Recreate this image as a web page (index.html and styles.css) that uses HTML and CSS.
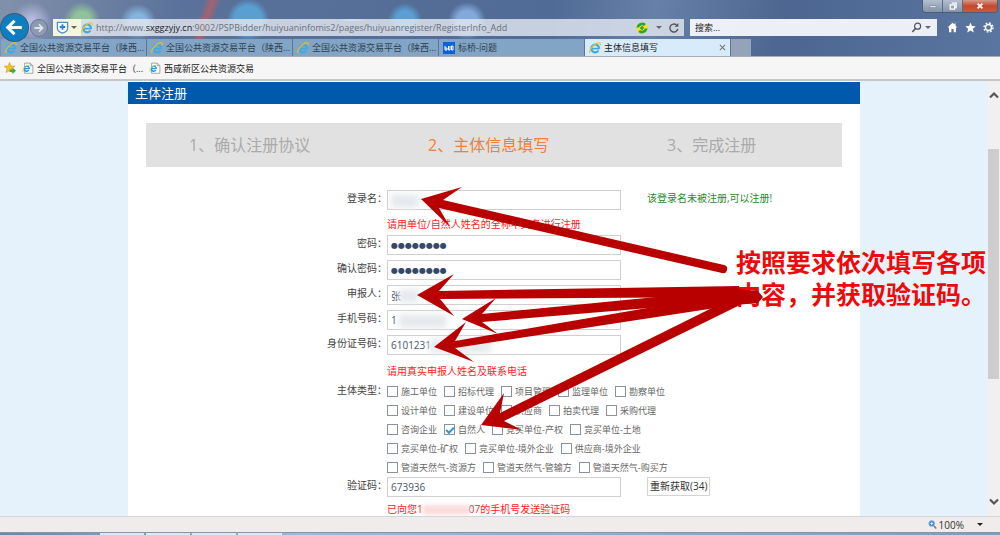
FILE: index.html
```html
<!DOCTYPE html>
<html lang="zh-CN">

<head>
    <meta charset="UTF-8">
    <meta name="viewport" content="width=device-width, initial-scale=1.0">
    <title>主体信息填写</title>
    <link rel="stylesheet" href="styles.css">
</head>

<body>

    <svg class="defs" width="0" height="0">
        <defs>
            <symbol id="ie" viewBox="0 0 16 16">
                <path d="M13.4 8.9A5.2 5.2 0 1 0 12.6 11.4" fill="none" stroke="#3fa9e8" stroke-width="2.8"></path>
                <path d="M4 8.8H14" stroke="#3fa9e8" stroke-width="2.2"></path>
                <path d="M1.6 14.6C-.8 12 5.5 2.6 11.6 1.2C14.6.5 15.5 2 14.6 4.4" fill="none" stroke="#f3bd1d" stroke-width="1.5"></path>
            </symbol>
            <symbol id="ie-page" viewBox="0 0 16 16">
                <path d="M3.5 1.5H11L14.5 5V15H3.5Z" fill="#fff" stroke="#8a8a8a"></path>
                <path d="M11 1.5V5H14.5" fill="none" stroke="#8a8a8a"></path>
                <path d="M9.8 9A3.4 3.4 0 1 0 9.2 10.9M3.8 8.8H10" fill="none" stroke="#2b93dc" stroke-width="1.8"></path>
                <path d="M1.6 13.2C0 11 4 4.6 9.6 4.4" fill="none" stroke="#f3bd1d" stroke-width="1.2"></path>
            </symbol>
        </defs>
    </svg>

    <div class="window">

        <header class="chrome">
            <div class="window-buttons">
                <button class="min" aria-label="最小化"><svg viewBox="0 0 10 10"><path d="M1 5H9V7H1Z" fill="#fff" stroke="#555" stroke-width=".5"></path></svg></button>
                <button class="max" aria-label="还原"><svg viewBox="0 0 10 10"><path d="M3.5 1.5H9V7H7M1.5 3.5H7V9H1.5Z" fill="none" stroke="#fff" stroke-width="1.5"></path></svg></button>
                <button class="close" aria-label="关闭"><svg viewBox="0 0 10 10"><path d="M2 2L8 8M8 2L2 8" stroke="#fff" stroke-width="2.2"></path></svg></button>
            </div>

            <div class="toolbar">
                <button class="back" aria-label="后退"><svg viewBox="0 0 26 26"><path d="M20 13H7M13 6.5L6.5 13L13 19.5" fill="none" stroke="#fff" stroke-width="3"></path></svg></button>
                <button class="forward" aria-label="前进"><svg viewBox="0 0 18 18"><path d="M4 9H13M9 5L13 9L9 13" fill="none" stroke="#dde3ee" stroke-width="2"></path></svg></button>
                <div class="address">
                    <span class="shield">
                        <svg viewBox="0 0 14 14"><path d="M1.5 1.5H12.5V8Q12.5 11 7 13Q1.5 11 1.5 8Z" fill="#fff" stroke="#4a8fd8" stroke-width="1.4"></path><path d="M7 3.5V9.5M4 6.5H10" stroke="#2f7fd6" stroke-width="2"></path></svg>
                        <i class="caret"></i>
                    </span>
                    <svg class="icon"><use href="#ie"></use></svg>
                    <span class="url">http://www.<b>sxggzyjy.cn</b>:9002/PSPBidder/huiyuaninfomis2/pages/huiyuanregister/RegisterInfo_Add</span>
                    <svg class="icon" viewBox="0 0 12 12"><circle cx="6" cy="6" r="5.6" fill="#f7e11b"></circle><path d="M.5 5.5A5.6 5.6 0 0 1 9.8 2L8 4A3.3 3.3 0 0 0 3 5.5ZM11.5 6.5A5.6 5.6 0 0 1 2.2 10L4 8A3.3 3.3 0 0 0 9 6.5Z" fill="#27a536"></path><path d="M6 4V8M4 6H8" stroke="#27a536" stroke-width="1.5"></path></svg>
                    <i class="caret"></i>
                    <button class="reload" aria-label="刷新"><svg viewBox="0 0 12 12"><path d="M9.8 7A4 4 0 1 1 8.5 3" fill="none" stroke="#555" stroke-width="1.4"></path><path d="M6.6 4.8H10.4V1Z" fill="#555"></path></svg></button>
                </div>
                <div class="search">
                    <input type="text" aria-label="搜索" placeholder="搜索...">
                    <svg viewBox="0 0 12 12"><circle cx="7.2" cy="4.5" r="3.3" fill="none" stroke="#555" stroke-width="1.3"></circle><path d="M4.8 7L1.5 10.8" stroke="#555" stroke-width="1.7"></path></svg>
                    <i class="caret"></i>
                </div>
                <div class="tools">
                    <svg viewBox="0 0 12 12"><path d="M6 .8L.6 6H2.2V11.2H4.8V7.5H7.2V11.2H9.8V6H11.4L9.4 4V1.5H8V2.7Z" fill="#fff"></path></svg>
                    <svg viewBox="0 0 12 12"><path d="M6 .5L7.6 4.3L11.7 4.6L8.6 7.3L9.6 11.4L6 9.2L2.4 11.4L3.4 7.3L.3 4.6L4.4 4.3Z" fill="#fff"></path></svg>
                    <svg viewBox="0 0 12 12"><circle cx="6" cy="6" r="3.3" fill="none" stroke="#fff" stroke-width="1.6"></circle><circle cx="6" cy="6" r="4.9" fill="none" stroke="#fff" stroke-width="1.6" stroke-dasharray="1.9 1.95"></circle></svg>
                </div>
            </div>

            <nav class="tabs">
                <a class="tab" href="#"><svg class="icon"><use href="#ie"></use></svg><span>全国公共资源交易平台（陕西...</span></a>
                <a class="tab" href="#"><svg class="icon"><use href="#ie"></use></svg><span>全国公共资源交易平台（陕西...</span></a>
                <a class="tab" href="#"><svg class="icon"><use href="#ie"></use></svg><span>全国公共资源交易平台（陕西...</span></a>
                <a class="tab" href="#"><svg class="icon" viewBox="0 0 12 12"><path d="M0 0H12V12H0Z" fill="#0b62dc"></path><path d="M2 4V8M2 6H4V8H2M5.5 4V8H7V4M8.5 4H10V8H8.5Z" fill="none" stroke="#fff" stroke-width="1"></path></svg><span>标桥-问题</span></a>
                <a class="tab active" href="#"><svg class="icon"><use href="#ie"></use></svg><span>主体信息填写</span><svg class="tab-close" viewBox="0 0 8 8"><path d="M1 1L7 7M7 1L1 7" stroke="#777" stroke-width="1.2"></path></svg></a>
                <button class="new-tab" aria-label="新建选项卡"></button>
            </nav>
        </header>

        <div class="favorites">
            <svg class="icon" viewBox="0 0 12 12"><path d="M5.5 .5L7 4L10.8 4.3L8 6.8L8.8 10.6L5.5 8.6L2.2 10.6L3 6.8L.2 4.3L4 4Z" fill="#f9c22e" stroke="#d8941a" stroke-width=".6"></path><path d="M5.5 7.5H8.5V5.5L12 8.7L8.5 12V10H5.5Z" fill="#3bb23b"></path></svg>
            <a href="#"><svg class="icon"><use href="#ie-page"></use></svg>全国公共资源交易平台（...</a>
            <a href="#"><svg class="icon"><use href="#ie-page"></use></svg>西咸新区公共资源交易</a>
        </div>

        <div class="viewport">
            <main class="page">
                <h1>主体注册</h1>

                <ol class="steps">
                    <li>1、确认注册协议</li>
                    <li class="current">2、主体信息填写</li>
                    <li>3、完成注册</li>
                </ol>

                <form class="register">
                    <div class="group">
                        <div class="row">
                            <label for="login">登录名：</label>
                            <div class="field"><input type="text" id="login"><span class="mask mask-login"></span></div>
                            <span class="ok">该登录名未被注册,可以注册!</span>
                        </div>
                        <p class="hint">请用单位/自然人姓名的全称中文名进行注册</p>
                        <div class="row">
                            <label for="pwd">密码：</label>
                            <div class="field"><input type="text" class="dots" id="pwd" value="●●●●●●●●"></div>
                        </div>
                        <div class="row">
                            <label for="pwd2">确认密码：</label>
                            <div class="field"><input type="text" class="dots" id="pwd2" value="●●●●●●●●"></div>
                        </div>
                        <div class="row">
                            <label for="person">申报人：</label>
                            <div class="field"><input type="text" id="person" value="张"><span class="mask mask-person"></span></div>
                        </div>
                        <div class="row">
                            <label for="phone">手机号码：</label>
                            <div class="field"><input type="text" id="phone" value="1"><span class="mask mask-phone"></span></div>
                        </div>
                        <div class="row">
                            <label for="idcard">身份证号码：</label>
                            <div class="field"><input type="text" id="idcard" value="6101231"><span class="mask mask-id"></span></div>
                        </div>
                    </div>

                    <div class="group types-group">
                        <p class="hint">请用真实申报人姓名及联系电话</p>
                        <div class="types" role="group" aria-labelledby="types-label">
                            <span class="types-label" id="types-label">主体类型：</span>
                            <div class="options">
                                <div class="line">
                                    <label><input type="checkbox">施工单位</label>
                                    <label><input type="checkbox">招标代理</label>
                                    <label><input type="checkbox">项目管理</label>
                                    <label><input type="checkbox">监理单位</label>
                                    <label><input type="checkbox">勘察单位</label>
                                </div>
                                <div class="line">
                                    <label><input type="checkbox">设计单位</label>
                                    <label><input type="checkbox">建设单位</label>
                                    <label><input type="checkbox">供应商</label>
                                    <label><input type="checkbox">拍卖代理</label>
                                    <label><input type="checkbox">采购代理</label>
                                </div>
                                <div class="line">
                                    <label><input type="checkbox">咨询企业</label>
                                    <label><input type="checkbox" checked>自然人</label>
                                    <label><input type="checkbox">竞买单位-产权</label>
                                    <label><input type="checkbox">竞买单位-土地</label>
                                </div>
                                <div class="line">
                                    <label><input type="checkbox">竞买单位-矿权</label>
                                    <label><input type="checkbox">竞买单位-境外企业</label>
                                    <label><input type="checkbox">供应商-境外企业</label>
                                </div>
                                <div class="line">
                                    <label><input type="checkbox">管道天然气-资源方</label>
                                    <label><input type="checkbox">管道天然气-管输方</label>
                                    <label><input type="checkbox">管道天然气-购买方</label>
                                </div>
                            </div>
                        </div>
                    </div>

                    <div class="group code-group">
                        <div class="row">
                            <label for="code">验证码：</label>
                            <div class="field"><input type="text" id="code" value="673936"></div>
                            <button type="button" class="resend">重新获取(34)</button>
                        </div>
                        <p class="hint">已向您1<span class="smudge"></span>07的手机号发送验证码</p>
                    </div>
                </form>
            </main>

            <div class="scrollbar">
                <svg viewBox="0 0 10 8"><path d="M1 6.5L5 2.5L9 6.5" fill="none" stroke="#555" stroke-width="2.2"></path></svg>
                <div class="track"><div class="thumb"></div></div>
                <svg viewBox="0 0 10 8"><path d="M1 1.5L5 5.5L9 1.5" fill="none" stroke="#555" stroke-width="2.2"></path></svg>
            </div>
        </div>

        <footer class="status">
            <svg viewBox="0 0 12 12"><circle cx="5" cy="4.8" r="4" fill="#2f86d8" stroke="#9cc3e8"></circle><path d="M5 2.8V6.8M3 4.8H7" stroke="#fff" stroke-width="1.2"></path><path d="M8 8L11 11.2" stroke="#a5673a" stroke-width="2"></path></svg>
            <span>100%</span>
            <i class="caret"></i>
        </footer>
        <div class="taskbar"><i></i><i></i><i></i><i></i></div>
    </div>

    <p class="note">按照要求依次填写各项<br>内容，并获取验证码。</p>

    <!-- arrows from the note to the fields -->
    <svg class="arrows" width="1000" height="535" viewBox="0 0 1000 535">
        <path d="M421 199L462 187L443 200L724 265A4 4 0 0 1 722 273L439 208L450 227Z"></path>
        <path d="M417 295L454 274L439 291L739 286L741 297L440 299L454 316Z"></path>
        <path d="M462 319L496 298L482 314L738 289L757 291L757 299L482 322L498 334Z"></path>
        <path d="M434 347L466 322L455 341L740 292L757 290L763 297L758 303L735 305L455 348L474 362Z"></path>
        <path d="M481 425L504 393L500 413L716 306L750 293L758 303L742 304L504 421L522 430Z"></path>
    </svg>

</body>

</html>
```
FILE: styles.css
```css
* {
    box-sizing: border-box;
}

body {
    margin: 0;
    position: relative;
    font-family: "Open Sans", "Noto Sans CJK SC", sans-serif;
    font-size: 10px;
    color: #444;
    overflow: hidden;
}

button {
    border: 0;
    padding: 0;
    font: inherit;
    background: none;
}

a {
    color: inherit;
    text-decoration: none;
}

.defs {
    position: absolute;
}

.window {
    display: flex;
    flex-direction: column;
    height: 100vh;
}

.icon {
    width: 12px;
    height: 12px;
    flex: none;
}

.caret {
    border: 3px solid transparent;
    border-top-color: #666;
    border-bottom: 0;
}

/* browser chrome */
.chrome {
    position: relative;
    padding-top: 16px;
    border-bottom: 1px solid #a9aeb8;
    background:
        radial-gradient(circle at 32px 22px, #b6b8e0 4px, transparent 20px),
        radial-gradient(circle at 82px 20px, #8fc29a 8px, transparent 18px),
        radial-gradient(circle at 138px 22px, #85b4de 8px, transparent 18px),
        linear-gradient(110deg, transparent 192px, #a8616e 200px, transparent 208px),
        radial-gradient(circle at 248px 20px, #5a9fd2 14px, transparent 21px),
        radial-gradient(ellipse at 353px 20px, #a3b6b8 8px, transparent 16px),
        radial-gradient(circle at 405px 20px, #5b9fd2 9px, transparent 17px),
        radial-gradient(circle at 467px 21px, #83a9dc 10px, transparent 19px),
        radial-gradient(ellipse at 795px 22px, #a9c8e4 8px, transparent 18px),
        radial-gradient(ellipse at 848px 22px, #a3bdc9 6px, transparent 16px),
        radial-gradient(ellipse at 903px 22px, #8fa7b3 6px, transparent 16px),
        radial-gradient(ellipse at 954px 22px, #91aeb8 6px, transparent 16px),
        linear-gradient(100deg, #8291ab 0%, #5a729a 18%, #506b96 55%, #6780a8 65%, #4c6691 78%, #5a759f 100%);
}

.window-buttons {
    position: absolute;
    top: 0;
    right: 2px;
    display: flex;
    height: 13px;
    border: 1px solid #4f5c74;
    border-top: 0;
    border-radius: 0 0 4px 4px;
    overflow: hidden;
}

.window-buttons button {
    width: 20px;
    border-right: 1px solid #5d6b84;
    background: linear-gradient(#b3bfd0, #8493ac);
    display: flex;
    align-items: center;
    justify-content: center;
}

.window-buttons .close {
    width: 34px;
    border-right: 0;
    background: linear-gradient(#d89a8c, #c5482c 50%, #cc5a3c);
}

.window-buttons svg {
    width: 8px;
    height: 8px;
}

.toolbar {
    display: flex;
    align-items: center;
    height: 23px;
}

.toolbar .back {
    position: relative;
    width: 27px;
    height: 27px;
    margin-left: 1px;
    border-radius: 50%;
    background: #0d7fc1;
    box-shadow: 0 0 0 1px #38597d;
    flex: none;
}

.toolbar .forward {
    width: 18px;
    height: 18px;
    margin: 0 5px 0 2px;
    border: 1px solid #67758f;
    border-radius: 50%;
    background: #8e9ab2;
    flex: none;
}

.address {
    flex: 1;
    display: flex;
    align-items: center;
    height: 17px;
    padding-right: 4px;
    background: rgba(226, 230, 240, 0.82);
}

.address .shield {
    display: flex;
    align-items: center;
    align-self: stretch;
    gap: 2px;
    padding: 0 4px 0 3px;
    background: #f4f7dc;
}

.address .shield svg {
    width: 13px;
    height: 13px;
}

.url {
    flex: 1;
    margin-left: 3px;
    color: #6c6f78;
    font-size: 9px;
    white-space: nowrap;
}

.url b {
    color: #222;
    font-weight: normal;
}

.address > .caret {
    margin: 0 6px 0 8px;
}

.reload {
    width: 12px;
    height: 12px;
}

.reload svg {
    display: block;
}

.search {
    display: flex;
    align-items: center;
    width: 247px;
    height: 17px;
    margin-left: 6px;
    padding-right: 6px;
    background: rgba(250, 251, 254, 0.92);
}

.search input {
    flex: 1;
    min-width: 0;
    border: 0;
    padding: 0 5px;
    background: none;
    font: inherit;
    font-size: 9px;
}

.search input::placeholder {
    color: #222;
}

.search svg {
    width: 11px;
    height: 11px;
    margin-right: 3px;
}

.tools {
    display: flex;
    gap: 7px;
    padding: 0 6px 0 10px;
}

.tools svg {
    width: 11px;
    height: 11px;
}

.tabs {
    display: flex;
    height: 17px;
    padding-left: 1px;
}

.tab {
    flex: 0 1 146px;
    display: flex;
    align-items: center;
    gap: 3px;
    min-width: 0;
    padding: 0 4px;
    border-right: 1px solid #5b7697;
    background: #82a5c5;
    color: #2f3f52;
    font-size: 9px;
    white-space: nowrap;
}

.tab.active {
    background: #d8ebfa;
    color: #222;
}

.tab-close {
    width: 7px;
    height: 7px;
    margin-left: auto;
}

.new-tab {
    width: 20px;
    background: #94a3b8;
}

.favorites {
    display: flex;
    align-items: center;
    gap: 6px;
    height: 24px;
    padding-left: 4px;
    border-bottom: 2px solid #c4c6c8;
    background: #f6f6f6;
    color: #222;
    font-size: 9px;
}

.favorites a {
    display: flex;
    align-items: center;
    gap: 3px;
}

/* page */
.viewport {
    flex: 1;
    min-height: 0;
    display: flex;
    overflow: hidden;
    background: #e5f2fb;
}

.page {
    width: 732px;
    margin: 0 auto;
    background: #fff;
}

.page h1 {
    margin: 1px 0 0;
    padding-left: 7px;
    background: #0059aa;
    color: #fff;
    font-size: 13px;
    font-weight: normal;
    line-height: 22px;
}

.steps {
    display: flex;
    margin: 19px 18px 0;
    padding: 0 0 0 43px;
    background: #e1e1e1;
    color: #aaa;
    font-size: 16px;
    line-height: 44px;
    list-style: none;
}

.steps li {
    flex: 0 0 239px;
}

.steps li:last-child {
    flex: 1;
}

.steps .current {
    color: #f47f33;
}

.register {
    padding-top: 23px;
}

.group {
    display: flex;
    flex-direction: column;
    gap: 5px;
}

.row {
    display: grid;
    grid-template-columns: 259px 234px 1fr;
    height: 20px;
    line-height: 17px;
}

.row > label,
.types-label {
    text-align: right;
}

.field {
    position: relative;
    display: flex;
}

.field input {
    width: 100%;
    height: 20px;
    border: 1px solid #d0d0d0;
    padding: 0 3px;
    background: #fff;
    color: #4a5568;
    font: inherit;
}

.field .dots {
    color: #36486a;
    font-family: "DejaVu Sans", sans-serif;
    font-size: 8px;
}

.mask {
    position: absolute;
    top: 4px;
    height: 14px;
    background: #e6e9ed;
    filter: blur(3px);
}

.mask-login {
    left: 4px;
    width: 28px;
}

.mask-person {
    left: 12px;
    width: 20px;
}

.mask-phone {
    left: 12px;
    width: 48px;
}

.mask-id {
    left: 42px;
    width: 62px;
}

.ok {
    margin-left: 26px;
    color: #2a8a2a;
}

.hint {
    height: 15px;
    margin: 0 0 0 259px;
    color: #f22;
    line-height: 18px;
    white-space: nowrap;
}

.smudge {
    display: inline-block;
    width: 46px;
    height: 10px;
    vertical-align: middle;
    background: #fbdcdc;
    filter: blur(2px);
}

.types-group {
    margin-top: 7px;
}

.types {
    display: grid;
    grid-template-columns: 259px 1fr;
}

.types-label {
    line-height: 17px;
}

.line {
    display: flex;
    gap: 7px;
    height: 19px;
    color: #666;
    font-size: 9px;
}

.line label {
    display: flex;
    align-items: center;
    gap: 3px;
}

.line input {
    appearance: none;
    display: grid;
    place-items: center;
    width: 11px;
    height: 11px;
    margin: 0;
    border: 1px solid #8b93a3;
    background: #fff;
}

.line input:checked::before {
    content: "";
    width: 6px;
    height: 3px;
    border: solid #2a94d8;
    border-width: 0 0 2px 2px;
    transform: rotate(-45deg);
}

.code-group .hint {
    height: 14px;
    line-height: 14px;
}

.resend {
    justify-self: start;
    height: 19px;
    margin-left: 26px;
    padding: 0 2px;
    border: 1px solid #d4d4d4;
    background: #fff;
    color: #333;
    font-size: 10px;
}

.scrollbar {
    display: flex;
    flex-direction: column;
    align-items: center;
    width: 12px;
    padding: 10px 0 10px;
    background: #f0f0f0;
}

.scrollbar svg {
    width: 10px;
    height: 8px;
}

.track {
    flex: 1;
    align-self: stretch;
    padding-top: 50px;
}

.thumb {
    width: 11px;
    height: 66%;
    background: #cdcdcd;
}

.status {
    display: flex;
    align-items: center;
    justify-content: flex-end;
    height: 16px;
    padding-right: 17px;
    border-top: 1px solid #d3d6d8;
    background: #f0eceb;
    color: #333;
}

.status svg {
    width: 9px;
    height: 9px;
    margin-right: 2px;
}

.status .caret {
    margin-left: 13px;
    border-top-color: #222;
}

.taskbar {
    display: flex;
    gap: 2px;
    height: 3px;
    padding-left: 100px;
    border-top: 1px solid #8696a8;
    background: linear-gradient(90deg, #6d89a8, #9db8d8 30%, #7f9cbc);
}

.taskbar i {
    width: 44px;
    background: #dfe8f2;
}

/* annotation over the window */
.note {
    position: absolute;
    top: 246px;
    left: 736px;
    margin: 0;
    color: #ee0a0a;
    font-size: 25px;
    font-weight: bold;
    line-height: 32px;
    white-space: nowrap;
}

.arrows {
    position: absolute;
    top: 0;
    left: 0;
    fill: #b80000;
    pointer-events: none;
}
```
